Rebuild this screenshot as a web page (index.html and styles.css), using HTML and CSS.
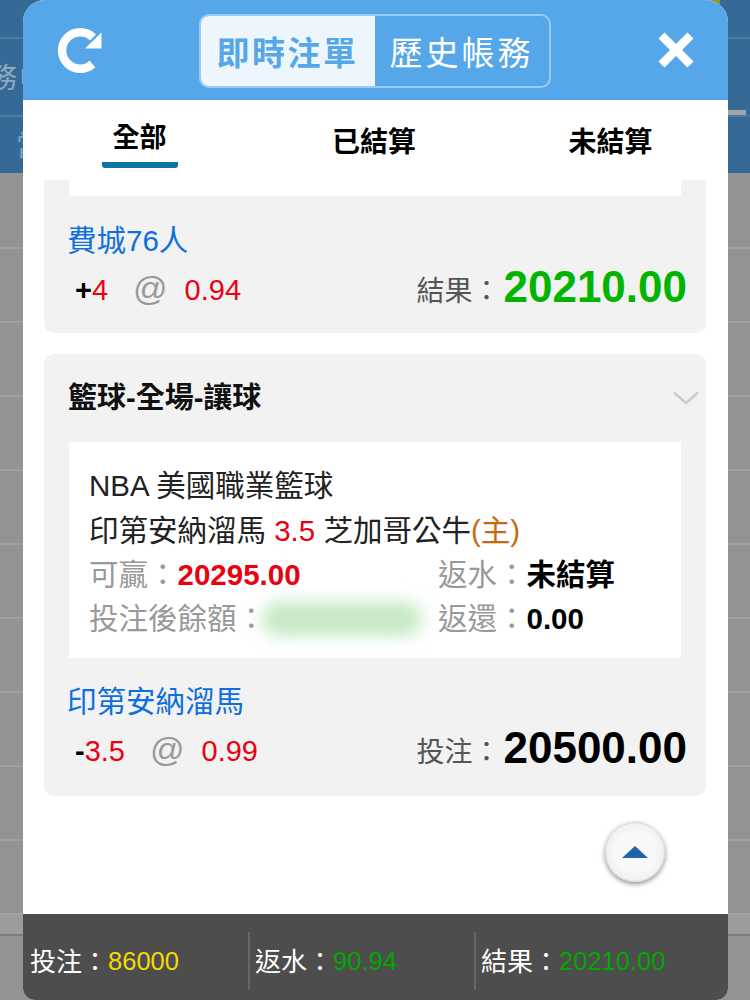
FILE: index.html
```html
<!DOCTYPE html>
<html lang="zh-Hant">
<head>
<meta charset="utf-8">
<title>注單</title>
<link rel="stylesheet" href="styles.css">
</head>
<body>
<div class="backdrop">
  <div class="bg-top">
    <div class="bg-row bg-row-a"><span class="bg-dot"></span></div>
    <div class="bg-row bg-row-b"><span class="bg-text-a">務帳</span><span class="bg-pill"></span></div>
    <div class="bg-row bg-row-c"><span class="bg-text-b">當</span></div>
  </div>
  <div class="bg-grey"></div><div class="bg-grey"></div><div class="bg-grey"></div><div class="bg-grey"></div><div class="bg-grey"></div>
  <div class="bg-grey"></div><div class="bg-grey"></div><div class="bg-grey"></div><div class="bg-grey"></div><div class="bg-grey"></div>
  <div class="bg-band"></div>
</div>

<div class="modal">
  <header class="head">
    <div class="head-side">
      <svg class="icon-refresh" width="46" height="46" viewBox="0 0 46 46" aria-hidden="true">
        <path d="M36 9.5 A 18.2 18.2 0 1 0 35.5 36" fill="none" stroke="#fff" stroke-width="8.5"/>
        <path d="M44.5 4.5 V20.5 H28 Z" fill="#fff"/>
      </svg>
    </div>
    <div class="segment">
      <div class="seg seg-on">即時注單</div>
      <div class="seg">歷史帳務</div>
    </div>
    <div class="head-side head-side-end">
      <svg width="36" height="36" viewBox="0 0 36 36" aria-hidden="true">
        <path d="M3.5 3.5 L32.5 32.5 M32.5 3.5 L3.5 32.5" fill="none" stroke="#fff" stroke-width="8.5"/>
      </svg>
    </div>
  </header>

  <nav class="tabs">
    <div class="tab tab-on"><span class="tab-label">全部</span></div>
    <div class="tab tab-mid">已結算</div>
    <div class="tab">未結算</div>
  </nav>

  <main class="list">
    <section class="card">
      <div class="stub"></div>
      <div class="team">費城76人</div>
      <div class="bet">
        <div class="odds"><b class="sign">+</b><span class="red">4</span><span class="at">@</span><span class="red">0.94</span></div>
        <div class="sum"><span class="sum-label">結果：</span><span class="sum-val green">20210.00</span></div>
      </div>
    </section>

    <section class="card card-next">
      <div class="card-head">
        <span class="card-title">籃球-全場-讓球</span>
        <svg width="26" height="14" viewBox="0 0 26 14" aria-hidden="true"><path d="M1 1.5 L13 12 L25 1.5" fill="none" stroke="#ccc" stroke-width="2.5"/></svg>
      </div>
      <div class="detail">
        <div class="line">NBA 美國職業籃球</div>
        <div class="line">印第安納溜馬 <span class="red">3.5</span> 芝加哥公牛<span class="orange">(主)</span></div>
        <div class="pair-row">
          <div class="pair"><span class="key">可贏：</span><b class="red">20295.00</b></div>
          <div class="pair"><span class="key">返水：</span><b>未結算</b></div>
        </div>
        <div class="pair-row">
          <div class="pair"><span class="key">投注後餘額：</span><span class="smudge"></span></div>
          <div class="pair"><span class="key">返還：</span><b>0.00</b></div>
        </div>
      </div>
      <div class="team team-next">印第安納溜馬</div>
      <div class="bet">
        <div class="odds"><b class="sign">-</b><span class="red">3.5</span><span class="at">@</span><span class="red">0.99</span></div>
        <div class="sum"><span class="sum-label">投注：</span><span class="sum-val">20500.00</span></div>
      </div>
    </section>

    <button class="to-top" type="button" aria-label="top"><span class="to-top-arrow"></span></button>
  </main>

  <footer class="foot">
    <div class="foot-cell">投注：<span class="yellow">86000</span></div>
    <div class="foot-cell foot-cell-line">返水：<span class="lime">90.94</span></div>
    <div class="foot-cell foot-cell-line">結果：<span class="lime">20210.00</span></div>
  </footer>
</div>
</body>
</html>
```
FILE: styles.css
```css
* { box-sizing: border-box; }
html, body { margin: 0; padding: 0; }
body {
  width: 750px;
  height: 1000px;
  overflow: hidden;
  position: relative;
  background: #939393;
  font-family: "Liberation Sans", "Noto Sans CJK TC", sans-serif;
  color: #222;
}

/* page behind the dialog */
.backdrop { width: 750px; height: 1000px; overflow: hidden; }
.bg-top { height: 173px; background: #366a96; }
.bg-row { position: relative; overflow: hidden; }
.bg-row-a { height: 39px; border-bottom: 2px solid #4f7ca4; }
.bg-row-b { height: 78px; border-bottom: 2px solid #4f7ca4; color: #8fa9c0; }
.bg-row-c { height: 56px; color: #7f9fbb; }
.bg-dot { position: absolute; right: 30px; top: -4px; width: 10px; height: 8px; background: #8d9a30; }
.bg-text-a { display: block; margin: 20px 0 0 -11px; font-size: 28px; line-height: 40px; letter-spacing: 3px; white-space: nowrap; }
.bg-text-b { display: block; margin: 10px 0 0 16px; font-size: 28px; line-height: 40px; }
.bg-pill { position: absolute; left: 700px; top: 71px; width: 46px; height: 6px; background: #a3a3a3; }
.bg-grey { height: 74px; border-bottom: 2px solid #a1a1a1; }
.bg-top + .bg-grey { height: 76px; }
.bg-band { height: 21px; background: #9c9c9c; border-bottom: 2px solid #7d7d7d; }

/* dialog */
.modal {
  position: absolute;
  left: 23px;
  top: 0;
  width: 705px;
  height: 1000px;
  display: flex;
  flex-direction: column;
  background: #fff;
  border-radius: 22px 22px 12px 12px;
  overflow: hidden;
}
.head {
  height: 100px;
  flex: none;
  background: #55a7ea;
  display: flex;
  align-items: center;
  justify-content: space-between;
  padding: 0 34px;
}
.head-side { width: 49px; display: flex; }
.head-side-end { width: 51px; justify-content: flex-end; }
.icon-refresh { margin-top: 1px; }
.segment {
  width: 352px;
  height: 74px;
  display: flex;
  border: 2px solid #9acbf3;
  border-radius: 10px;
  overflow: hidden;
  margin-top: 1px;
}
.seg {
  flex: 1;
  display: flex;
  align-items: center;
  justify-content: center;
  color: #fff;
  font-size: 33px;
  letter-spacing: 3px;
}
.seg-on { background: #eef6fd; color: #55a7ea; font-weight: 700; letter-spacing: 2.5px; }

.tabs {
  height: 80px;
  flex: none;
  display: grid;
  grid-template-columns: 234px 236px 235px;
}
.tab {
  display: flex;
  align-items: center;
  justify-content: center;
  font-size: 28px;
  font-weight: 700;
  color: #000;
}
.tab-mid { padding-right: 2px; }
.tab-on { align-items: flex-start; padding-top: 16px; font-size: 27px; }
.tab-label {
  display: block;
  width: 76px;
  height: 52px;
  line-height: 44px;
  text-align: center;
  border-bottom: 6px solid #0e72a8;
  border-radius: 0 0 3px 3px;
  margin-right: 1px;
}

.list {
  position: relative;
  flex: 1;
  min-height: 0;
  padding: 0 22px 0 21px;
  overflow: hidden;
}
.card {
  background: #f2f2f2;
  border-radius: 0 0 10px 10px;
  padding: 0 19px 20px 25px;
}
.card-next { margin-top: 21px; border-radius: 10px; padding-right: 19px; padding-bottom: 22px; }
.stub { height: 16px; background: #fff; margin-right: 6px; }
.team {
  margin-top: 25px;
  margin-bottom: -1px;
  margin-left: -2px;
  font-size: 29.5px;
  line-height: 40px;
  color: #0d6fe0;
}
.team-next { margin-top: 24px; }
.bet { display: flex; justify-content: space-between; align-items: center; height: 50px; margin-top: 3px; }
.odds { padding-left: 6px; font-size: 29px; white-space: nowrap; }
.sign { color: #000; }
.at { margin: 0 17px 0 25px; font-size: 34px; color: #999; }
.sum { display: flex; align-items: center; white-space: nowrap; }
.sum-label { font-size: 28px; color: #555; margin-right: 3px; margin-top: 2px; }
.sum-val { font-size: 44px; font-weight: 700; color: #000; line-height: 50px; margin-top: -2px; }

.card-head {
  height: 88px;
  display: flex;
  align-items: center;
  justify-content: space-between;
  margin-left: -1px;
  margin-right: -12px;
}
.card-title { font-size: 29px; font-weight: 700; color: #111; margin-bottom: 7px; }
.detail {
  height: 216px;
  margin-right: 6px;
  padding: 21px 0 0 20px;
  background: #fff;
  font-size: 29.5px;
}
.line { line-height: 45px; white-space: nowrap; color: #222; }
.pair-row { display: flex; line-height: 44px; }
.pair { display: flex; align-items: center; white-space: nowrap; }
.pair:first-child { width: 349px; }
.pair b { color: #000; }
.pair b.red { color: #eb0010; }
.key { color: #999; }
.smudge {
  display: block;
  flex: none;
  width: 160px;
  height: 34px;
  background: #c6e9c6;
  border-radius: 17px;
  filter: blur(8px);
  margin-left: -4px;
}

.red { color: #eb0010; }
.green { color: #00b400; }
.orange { color: #c9690f; }
.yellow { color: #f0dc00; margin-top: 3px; font-size: 25.5px; }
.lime { color: #00a800; margin-top: 3px; font-size: 25.5px; }

.to-top {
  position: absolute;
  left: 582px;
  top: 642px;
  width: 60px;
  height: 60px;
  padding: 0;
  border: 1px solid #d8d8d8;
  border-radius: 50%;
  background: radial-gradient(circle, #f8f8f8 0 50%, #ececec 80%, #e0e0e0 100%);
  box-shadow: 0 2px 5px rgba(0, 0, 0, 0.45);
  display: flex;
  align-items: center;
  justify-content: center;
}
.to-top-arrow {
  display: block;
  width: 0;
  height: 0;
  border-left: 13px solid transparent;
  border-right: 13px solid transparent;
  border-bottom: 12px solid #1f63a8;
  margin-top: -1px;
}

.foot {
  height: 86px;
  flex: none;
  background: #4d4d4d;
  color: #fff;
  display: grid;
  grid-template-columns: 225px 226px 1fr;
  padding-top: 18px;
  padding-bottom: 10px;
  font-size: 26px;
  white-space: nowrap;
}
.foot-cell { display: flex; align-items: center; padding-left: 7px; padding-bottom: 3px; }
.foot-cell-line { border-left: 2px solid #666; padding-left: 5px; }
```
